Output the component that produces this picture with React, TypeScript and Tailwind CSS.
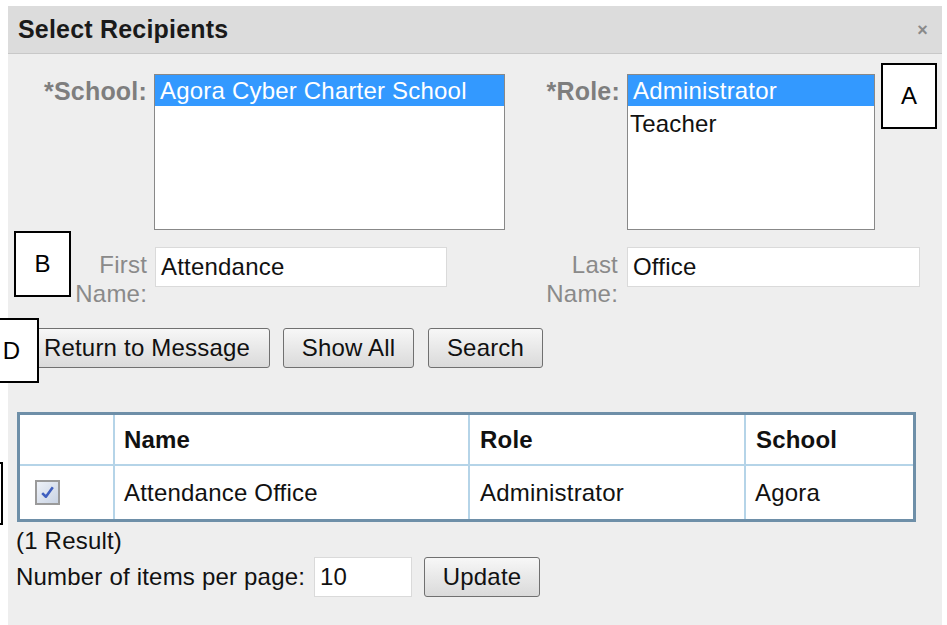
import React from "react";

function Callout({ letter, className }: { letter?: string; className: string }) {
  return (
    <div
      className={`absolute bg-white border-2 border-black flex items-center justify-center text-[24px] text-black ${className}`}
    >
      {letter}
    </div>
  );
}

function Btn({ label, className = "" }: { label: string; className?: string }) {
  return (
    <button
      className={`h-[40px] rounded-[3px] border border-[#707070] bg-gradient-to-b from-[#f7f7f7] to-[#dadada] text-[24px] leading-none text-[#111] flex items-center justify-center ${className}`}
    >
      {label}
    </button>
  );
}

function CheckBox() {
  return (
    <div className="w-[25px] h-[25px] border-2 border-[#9a9a9a] bg-gradient-to-br from-[#eef2f8] to-[#c9d3e3] flex items-center justify-center">
      <svg width="17" height="17" viewBox="0 0 16 16">
        <path d="M3 8.5 L6.5 12 L13 3" fill="none" stroke="#3f5fbf" strokeWidth="2.4" strokeLinejoin="round" />
      </svg>
    </div>
  );
}

export default function App() {
  return (
    <div className="relative w-[947px] h-[625px] overflow-hidden bg-white font-['Liberation_Sans',Arial,sans-serif] tracking-[0.2px]">
      <div className="ml-[8px] mt-[6px] w-[934px] h-[619px] bg-[#eeeeee] flex flex-col">
        {/* title bar */}
        <div className="h-[48px] shrink-0 bg-[#dcdcdc] border-b border-[#c8c8c8] flex items-center justify-between pl-[10px] pr-[14px]">
          <span className="text-[25px] font-bold text-[#1a1a1a]">Select Recipients</span>
          <span className="text-[18px] font-bold text-[#8a8a8a] leading-none">×</span>
        </div>

        <div className="flex flex-col pt-[20px]">
          {/* school / role lists */}
          <div className="flex items-start pl-[12px]">
            <div className="w-[127px] text-right font-bold text-[25px] leading-[31px] text-[#7e7e7e] pt-[2px]">*School:</div>
            <div className="ml-[7px] w-[351px] h-[156px] bg-white border border-[#888888] text-[24px]">
              <div className="h-[31px] leading-[31px] bg-[#3399ff] text-white pl-[5px]">Agora Cyber Charter School</div>
            </div>
            <div className="w-[115px] text-right font-bold text-[25px] leading-[31px] text-[#7e7e7e] pt-[2px]">*Role:</div>
            <div className="ml-[7px] w-[248px] h-[156px] bg-white border border-[#888888] text-[24px]">
              <div className="h-[31px] leading-[31px] bg-[#3399ff] text-white pl-[5px]">Administrator</div>
              <div className="h-[34px] leading-[36px] text-[#111] pl-[2px]">Teacher</div>
            </div>
          </div>

          {/* name fields */}
          <div className="flex items-start pl-[12px] mt-[17px]">
            <div className="w-[127px] text-right text-[24px] leading-[29px] text-[#8a8a8a] pt-[3px]">
              <div>First</div>
              <div>Name:</div>
            </div>
            <div className="ml-[8px] w-[292px] h-[40px] bg-white border border-[#dadada] pl-[5px] text-[24px] leading-[38px] text-[#111]">
              Attendance
            </div>
            <div className="w-[171px] text-right text-[24px] leading-[29px] text-[#8a8a8a] pt-[3px]">
              <div>Last</div>
              <div>Name:</div>
            </div>
            <div className="ml-[9px] w-[293px] h-[40px] bg-white border border-[#dadada] pl-[5px] text-[24px] leading-[38px] text-[#111]">
              Office
            </div>
          </div>

          {/* actions */}
          <div className="flex items-center pl-[16px] mt-[20px] gap-[13px]">
            <Btn label="Return to Message" className="w-[246px]" />
            <Btn label="Show All" className="w-[131px]" />
            <Btn label="Search" className="w-[115px] ml-[1px]" />
          </div>

          {/* results */}
          <div className="ml-[9px] mt-[44px] w-[899px] border-[3px] border-[#6e8fa8] bg-white text-[24px] text-[#111]">
            <div className="flex h-[49px] font-bold">
              <div className="w-[93px]" />
              <div className="w-[355px] border-l-2 border-[#b5d4e8] pl-[9px] flex items-center">Name</div>
              <div className="w-[276px] border-l-2 border-[#b5d4e8] pl-[10px] flex items-center">Role</div>
              <div className="flex-1 border-l-2 border-[#b5d4e8] pl-[10px] flex items-center">School</div>
            </div>
            <div className="flex h-[55px] border-t-2 border-[#b5d4e8]">
              <div className="w-[93px] pl-[15px] flex items-center">
                <CheckBox />
              </div>
              <div className="w-[355px] border-l-2 border-[#b5d4e8] pl-[9px] flex items-center">Attendance Office</div>
              <div className="w-[276px] border-l-2 border-[#b5d4e8] pl-[10px] flex items-center">Administrator</div>
              <div className="flex-1 border-l-2 border-[#b5d4e8] pl-[9px] flex items-center">Agora</div>
            </div>
          </div>

          <div className="pl-[8px] mt-[4px] text-[24px] leading-[30px] text-[#111]">(1 Result)</div>

          <div className="flex items-center pl-[8px] mt-[1px] text-[24px] text-[#111]">
            <span className="w-[298px]">Number of items per page:</span>
            <div className="w-[98px] h-[40px] bg-white border border-[#dadada] pl-[5px] leading-[38px]">10</div>
            <Btn label="Update" className="ml-[12px] w-[116px]" />
          </div>
        </div>
      </div>

      {/* annotation callouts */}
      <Callout letter="A" className="left-[881px] top-[63px] w-[56px] h-[66px]" />
      <Callout letter="B" className="left-[14px] top-[231px] w-[57px] h-[66px]" />
      <Callout letter="D" className="left-[-16px] top-[318px] w-[55px] h-[65px]" />
      <Callout className="left-[-56px] top-[462px] w-[59px] h-[63px]" />
    </div>
  );
}
